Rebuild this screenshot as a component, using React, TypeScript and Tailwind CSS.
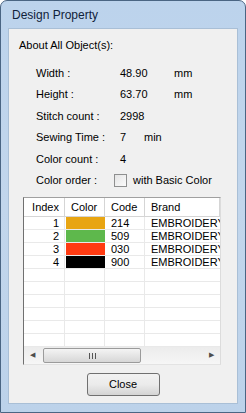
import React from "react";

const font = { fontFamily: '"Liberation Sans", Arial, sans-serif' };

const stats = [
  { label: "Width :", value: "48.90", unit: "mm", unitX: "w-[54px]" },
  { label: "Height :", value: "63.70", unit: "mm", unitX: "w-[54px]" },
  { label: "Stitch count :", value: "2998", unit: "", unitX: "w-[54px]" },
  { label: "Sewing Time :", value: "7", unit: "min", unitX: "w-[24px]" },
  { label: "Color count :", value: "4", unit: "", unitX: "w-[54px]" },
];

const threads = [
  { index: 1, color: "#e8a512", code: "214", brand: "EMBROIDERY" },
  { index: 2, color: "#5eb84c", code: "509", brand: "EMBROIDERY" },
  { index: 3, color: "#ff3b12", code: "030", brand: "EMBROIDERY" },
  { index: 4, color: "#000000", code: "900", brand: "EMBROIDERY" },
];

function Row({ children }: { children: React.ReactNode }) {
  return <div className="flex h-[21.5px] items-center pl-[27px]">{children}</div>;
}

function ListRow({ t }: { t?: (typeof threads)[number] }) {
  return (
    <div className="flex h-[13px] shrink-0 border-b border-[#e9e9e9] text-[11px] leading-[12px] text-black">
      <div className="w-[41px] shrink-0 border-r border-[#e9e9e9] pr-[5px] text-right">{t?.index}</div>
      <div className="w-[40px] shrink-0 border-r border-[#e9e9e9] pl-[1px]">
        {t && <div className="h-full w-[39px]" style={{ backgroundColor: t.color }} />}
      </div>
      <div className="w-[40px] shrink-0 border-r border-[#e9e9e9] pl-[6px]">{t?.code}</div>
      <div className="w-[120px] shrink-0 pl-[6px] whitespace-nowrap">{t?.brand}</div>
    </div>
  );
}

export default function App() {
  const empty = Array.from({ length: 6 });
  return (
    <div
      style={font}
      className="flex h-[413px] w-[246px] flex-col overflow-hidden rounded-t-[7px] border border-[#4a6583] bg-gradient-to-b from-[#bcd3ec] via-[#c2d6ec] to-[#bcd2ea]"
    >
      <div className="flex h-[27px] shrink-0 items-center pl-[11px] text-[12px] text-[#10223a]">
        Design Property
      </div>
      <div className="mx-[7px] flex h-[376px] flex-col border border-[#a9bfd6] bg-[#f0f0f0] text-[11px] text-black">
        <div className="h-[13px] pl-[10px] pt-[10px] leading-[13px]">About All Object(s):</div>
        <div className="mt-[20px]">
          {stats.map((s) => (
            <Row key={s.label}>
              <span className="w-[84px] shrink-0">{s.label}</span>
              <span className={`${s.unitX} shrink-0`}>{s.value}</span>
              <span>{s.unit}</span>
            </Row>
          ))}
          <Row>
            <span className="w-[78px] shrink-0">Color order :</span>
            <span className="h-[13px] w-[13px] shrink-0 border border-[#8e8f8f] bg-gradient-to-br from-[#e4e4e4] to-[#fbfbfb]" />
            <span className="ml-[6px]">with Basic Color</span>
          </Row>
        </div>

        <div className="ml-[14px] mt-[6px] flex h-[168px] w-[198px] flex-col overflow-hidden border border-t-[#a0a0a0] border-l-[#707070] border-r-[#dcdcdc] border-b-[#e3e3e3] bg-white">
          <div className="flex h-[19px] shrink-0 border-b border-[#d5d5d5] text-[11px] leading-[18px]">
            <div className="w-[41px] shrink-0 border-r border-[#d5d5d5] pr-[5px] text-right">Index</div>
            <div className="w-[40px] shrink-0 border-r border-[#d5d5d5] pl-[6px]">Color</div>
            <div className="w-[40px] shrink-0 border-r border-[#d5d5d5] pl-[6px]">Code</div>
            <div className="w-[75px] shrink-0 border-r border-[#d5d5d5] pl-[6px]">Brand</div>
          </div>
          <div className="flex flex-1 flex-col overflow-hidden">
            {threads.map((t) => (
              <ListRow key={t.index} t={t} />
            ))}
            {empty.map((_, i) => (
              <ListRow key={i} />
            ))}
          </div>
          <div className="flex h-[17px] shrink-0 items-center bg-gradient-to-b from-[#ececec] to-[#f6f6f6]">
            <div className="flex h-full w-[17px] items-center justify-center text-[7px] text-[#4d4d4d]">◀</div>
            <div className="ml-[2px] flex h-[15px] w-[98px] items-center justify-center rounded-[2px] border border-[#9b9b9b] bg-gradient-to-b from-[#f4f4f4] to-[#d7d7d7]">
              <div className="flex gap-[2px]">
                <span className="h-[6px] w-px bg-[#555]" />
                <span className="h-[6px] w-px bg-[#555]" />
                <span className="h-[6px] w-px bg-[#555]" />
              </div>
            </div>
            <div className="flex-1" />
            <div className="flex h-full w-[17px] items-center justify-center text-[7px] text-[#4d4d4d]">▶</div>
          </div>
        </div>

        <div className="mt-[8px] flex justify-center">
          <button className="h-[23px] w-[73px] rounded-[3px] border border-[#707070] bg-gradient-to-b from-[#f2f2f2] via-[#ebebeb] to-[#d4d4d4] text-[11px] text-black">
            Close
          </button>
        </div>
      </div>
    </div>
  );
}
